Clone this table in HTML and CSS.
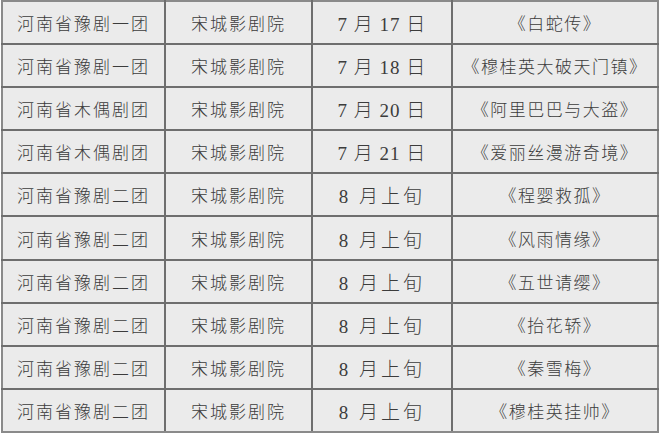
FILE: index.html
```html
<!DOCTYPE html>
<html lang="zh">
<head>
<meta charset="utf-8">
<link rel="stylesheet" href="styles.css">
</head>
<body>
<table class="schedule">
  <colgroup>
    <col class="c-troupe"><col class="c-venue"><col class="c-date"><col class="c-play">
  </colgroup>
  <tbody>
    <tr><td>河南省豫剧一团</td><td>宋城影剧院</td><td class="date">7 月 17 日</td><td class="play">《白蛇传》</td></tr>
    <tr><td>河南省豫剧一团</td><td>宋城影剧院</td><td class="date">7 月 18 日</td><td class="play">《穆桂英大破天门镇》</td></tr>
    <tr><td>河南省木偶剧团</td><td>宋城影剧院</td><td class="date">7 月 20 日</td><td class="play">《阿里巴巴与大盗》</td></tr>
    <tr><td>河南省木偶剧团</td><td>宋城影剧院</td><td class="date">7 月 21 日</td><td class="play">《爱丽丝漫游奇境》</td></tr>
    <tr><td>河南省豫剧二团</td><td>宋城影剧院</td><td class="date loose">8 月上旬</td><td class="play">《程婴救孤》</td></tr>
    <tr><td>河南省豫剧二团</td><td>宋城影剧院</td><td class="date loose">8 月上旬</td><td class="play">《风雨情缘》</td></tr>
    <tr><td>河南省豫剧二团</td><td>宋城影剧院</td><td class="date loose">8 月上旬</td><td class="play">《五世请缨》</td></tr>
    <tr><td>河南省豫剧二团</td><td>宋城影剧院</td><td class="date loose">8 月上旬</td><td class="play">《抬花轿》</td></tr>
    <tr><td>河南省豫剧二团</td><td>宋城影剧院</td><td class="date loose">8 月上旬</td><td class="play">《秦雪梅》</td></tr>
    <tr><td>河南省豫剧二团</td><td>宋城影剧院</td><td class="date loose">8 月上旬</td><td class="play">《穆桂英挂帅》</td></tr>
  </tbody>
</table>
</body>
</html>
```
FILE: styles.css
```css
html, body {
  margin: 0;
  padding: 0;
  background: #ffffff;
}

body {
  padding: 0 0 0 1px;
}

.schedule {
  border-collapse: collapse;
  table-layout: fixed;
  width: 656px;
  background: #ebebeb;
  border: 2px solid #8a8a8a;
  font-family: "Noto Sans CJK SC", sans-serif;
  font-size: 17px;
  color: #3c3c3c;
}

.c-troupe { width: 163px; }
.c-venue { width: 147px; }
.c-date { width: 140px; }
.c-play { width: 206px; }

.schedule td {
  height: 41.1px;
  padding: 0;
  text-align: center;
  vertical-align: middle;
  border: 2px solid #6e6e6e;
  letter-spacing: 2px;
  font-weight: 300;
  white-space: nowrap;
}

.schedule tr td:first-child { border-left-color: #8a8a8a; }
.schedule tr td:last-child { border-right-color: #8a8a8a; }
.schedule tr:first-child td { border-top-color: #8a8a8a; }
.schedule tr:last-child td { border-bottom-color: #8a8a8a; }

.schedule td.date {
  font-family: "Liberation Serif", "Noto Sans CJK SC", serif;
  font-size: 19px;
  letter-spacing: 1px;
}

.schedule td.date.loose {
  letter-spacing: 3px;
}

.schedule td.play {
  letter-spacing: 1.5px;
}
```
